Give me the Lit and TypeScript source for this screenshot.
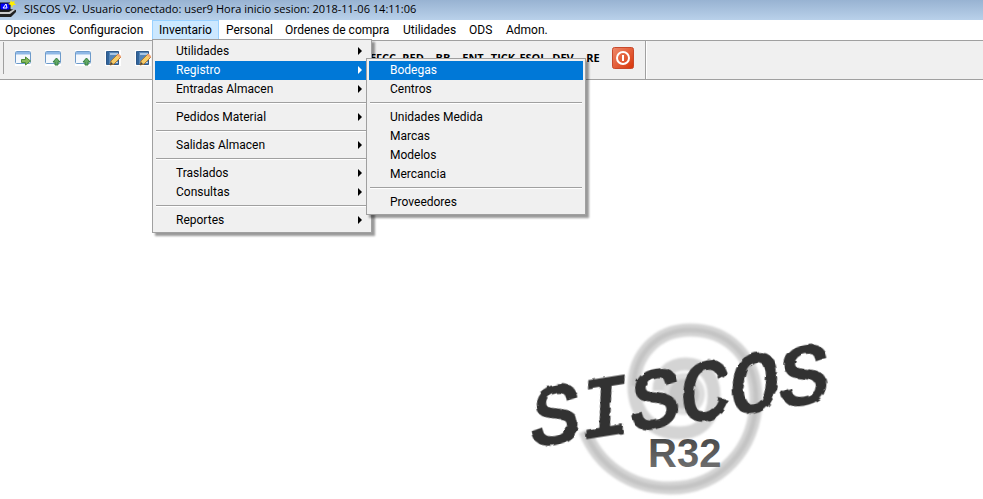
import { LitElement, html, css, svg, nothing } from "lit";
import { customElement, property } from "lit/decorators.js";

type Entry = { label: string; arrow?: boolean; active?: boolean } | null;

const inventory: Entry[] = [
  { label: "Utilidades", arrow: true },
  { label: "Registro", arrow: true, active: true },
  { label: "Entradas Almacen", arrow: true },
  null,
  { label: "Pedidos Material", arrow: true },
  null,
  { label: "Salidas Almacen", arrow: true },
  null,
  { label: "Traslados", arrow: true },
  { label: "Consultas", arrow: true },
  null,
  { label: "Reportes", arrow: true },
];

const registry: Entry[] = [
  { label: "Bodegas", active: true },
  { label: "Centros" },
  null,
  { label: "Unidades Medida" },
  { label: "Marcas" },
  { label: "Modelos" },
  { label: "Mercancia" },
  null,
  { label: "Proveedores" },
];

const topMenu = ["Opciones", "Configuracion", "Inventario", "Personal", "Ordenes de compra", "Utilidades", "ODS", "Admon."];

const windowFrame = svg`
  <rect width="16" height="16" fill="#fff"/>
  <rect x="0.5" y="1.5" width="15" height="12" rx="1" fill="#f4f8fd" stroke="#6e9bcb"/>
  <path d="M1 2h14v2H1z" fill="#8fb8e6"/><path d="M1 4h14v1H1z" fill="#c3d9f1"/>`;

const icons = {
  exit: svg`${windowFrame}<path d="M6.500 9.500h4V7l5 4-5 4v-2.500h-4z" fill="#86b95a" stroke="#4a8a35"/>`,
  up: svg`${windowFrame}<path d="M11.500 8l3.500 4h-2v3h-3v-3H8z" fill="#62a865" stroke="#35803f"/>`,
  edit: svg`
    <rect width="16" height="16" fill="#fff"/>
    <path d="M1.500 1.500h12v13h-12z" fill="#5585b8" stroke="#2e5788"/>
    <path d="M2 1h2v14H2z" fill="#32659b"/><path d="M5 3h8v2H5z" fill="#a9c6e4"/><path d="M5 12h8v1H5z" fill="#bdd2e8"/>
    <path d="M5 15l1-4 7-7 3 3-7 7z" fill="#f6cd6a" stroke="#b0782b"/><path d="M5 15l1-3 2 2z" fill="#444"/><path d="M12 5l1.500-1.500 3 3L15 8z" fill="#efa27a"/>`,
};

@customElement("popup-menu")
export class PopupMenu extends LitElement {
  @property({ attribute: false }) entries: Entry[] = [];

  static styles = css`
    :host { display: block; }
    .menu {
      box-sizing: border-box;
      width: 220px;
      margin: 0;
      padding: 2px;
      list-style: none;
      background: #f0f0f0;
      border: 1px solid #a0a0a0;
      box-shadow: 3px 3px 2px rgba(0, 0, 0, 0.4);
    }
    .item {
      display: flex;
      align-items: center;
      justify-content: space-between;
      width: 100%;
      height: 19px;
      padding: 0 7px 2px 21px;
      border: 0;
      background: none;
      color: #000;
      font: inherit;
      text-align: left;
    }
    .active { background: #0078d7; color: #fff; }
    .rule { height: 1px; margin: 3px 1px 4px; background: #a0a0a0; border-bottom: 1px solid #fff; }
    .arrow { width: 4px; height: 8px; fill: currentColor; }
  `;

  render() {
    return html`<ul class="menu" role="menu">
      ${this.entries.map((e) =>
        e === null
          ? html`<li class="rule" role="separator"></li>`
          : html`<li role="none">
              <button class="item ${e.active ? "active" : ""}" role="menuitem">
                ${e.label}
                ${e.arrow ? html`<svg class="arrow" viewBox="0 0 4 8"><path d="M0 0l4 4-4 4z"/></svg>` : nothing}
              </button>
            </li>`
      )}
    </ul>`;
  }
}

@customElement("app-root")
export class AppRoot extends LitElement {
  static styles = css`
    :host {
      display: flex;
      flex-direction: column;
      min-height: 100vh;
      background: #fff;
      color: #000;
      font: 12px/16px Roboto, "Noto Sans", sans-serif;
      overflow: hidden;
    }
    .title {
      display: flex;
      align-items: center;
      gap: 8px;
      height: 20px;
      background: linear-gradient(#98b3d2, #b9d1ea);
    }
    .title h1 { margin: 0; font: 11px/16px "Open Sans", "Noto Sans", sans-serif; white-space: nowrap; padding-bottom: 2px; }
    .app-icon { width: 16px; height: 20px; }
    .menubar {
      display: grid;
      grid-template-columns: 62px 90px 67px 59px 118px 66px 37px 57px;
      height: 20px;
    }
    .top {
      box-sizing: border-box;
      padding: 0 0 0 7px;
      border: 0;
      background: none;
      color: inherit;
      font: inherit;
      text-align: left;
      white-space: nowrap;
    }
    .menubar > .top:first-child { padding-left: 5px; }
    .open { background: #cce8ff; box-shadow: inset 0 0 0 1px #99d1ff; }
    .anchor { position: relative; display: grid; }
    .drop { position: absolute; z-index: 1; top: 19px; left: 0; }
    .sub { position: absolute; z-index: 2; top: 38px; left: 214px; }
    .toolbar {
      display: flex;
      height: 38px;
      background: #f0f0f0;
      border-top: 1px solid #a0a0a0;
      border-bottom: 1px solid #a0a0a0;
    }
    .band {
      display: flex;
      align-items: center;
      box-sizing: border-box;
      width: 646px;
      padding: 0 0 4px 5px;
      border-right: 1px solid #a0a0a0;
      box-shadow: 1px 0 #fff;
    }
    .grip { width: 1px; height: 32px; margin-left: -2px; margin-right: 4px; background: #a0a0a0; }
    .tool {
      display: grid;
      place-items: center;
      flex: none;
      width: 30px;
      height: 32px;
      padding: 0;
      border: 0;
      background: none;
      color: inherit;
      font: bold 11px/14px "Open Sans", "Noto Sans", sans-serif;
    }
    .glyph { width: 16px; height: 16px; }
    .power { width: 22px; height: 22px; }
    .workspace { flex: 1; display: flex; align-items: flex-end; justify-content: flex-end; }
    .logo { width: 340px; height: 189px; margin-right: 133px; }
    .word { font: italic 84px "Liberation Mono", monospace; fill: #333; stroke: #333; stroke-width: 3px; }
    .version { font: bold 40px "Liberation Sans", sans-serif; }
  `;

  private tool(name: string, icon: unknown) {
    return html`<button class="tool" aria-label=${name}><svg class="glyph" viewBox="0 0 16 16">${icon}</svg></button>`;
  }

  private topItem(label: string) {
    if (label !== "Inventario") return html`<button class="top">${label}</button>`;
    return html`<div class="anchor">
      <button class="top open" aria-expanded="true">${label}</button>
      <div class="drop">
        <popup-menu .entries=${inventory}></popup-menu>
      </div>
      <div class="sub"><popup-menu .entries=${registry}></popup-menu></div>
    </div>`;
  }

  render() {
    return html`
      <header class="title">
        <svg class="app-icon" viewBox="0 0 16 20">
          <path d="M0 10l10-1 6 1v2l-5 5H0z" fill="#222"/>
          <path d="M0 12h9l5-3 1 1-5 4H0z" fill="#ccc"/>
          <path d="M0 3h10v7H0z" fill="#00f" stroke="#111"/>
          <path d="M3 8l3-4 1 4z" stroke="#fff" fill="none"/>
          <path d="M11 0l1 2 3-1-1 2 2 2-3 0-1 3-1-3-3-1 2-1z" fill="#ffef00"/>
        </svg>
        <h1>SISCOS V2. Usuario conectado: user9 Hora inicio sesion: 2018-11-06 14:11:06</h1>
      </header>
      <nav class="menubar">${topMenu.map((t) => this.topItem(t))}</nav>
      <div class="toolbar" role="toolbar">
        <div class="band">
          <span class="grip"></span>
          ${this.tool("Salir", icons.exit)} ${this.tool("Abrir", icons.up)} ${this.tool("Subir", icons.up)}
          ${this.tool("Editar", icons.edit)} ${this.tool("Modificar", icons.edit)}
          ${Array.from({ length: 7 }, () => html`<span class="tool"></span>`)}
          ${["EFCC", "RED", "BB", "ENT", "TICK", "ESOL", "DEV", "RE"].map((t) => html`<button class="tool">${t}</button>`)}
          <button class="tool" aria-label="Apagar">
            <svg class="power" viewBox="0 0 22 22">
              <defs><linearGradient id="red" x2="1" y2="1"><stop stop-color="#ee8a6c"/><stop offset="1" stop-color="#d83408"/></linearGradient></defs>
              <rect x="0.5" y="0.5" width="21" height="21" rx="2" fill="url(#red)" stroke="#c8492c"/>
              <circle cx="11" cy="11" r="6" fill="none" stroke="#fff" stroke-width="2"/>
              <path d="M11 8v6" stroke="#fff" stroke-width="2"/>
            </svg>
          </button>
        </div>
      </div>
      <main class="workspace">
        <svg class="logo" viewBox="0 0 340 189">
          <defs>
            <filter id="soft"><feGaussianBlur stdDeviation="1"/></filter>
            <filter id="rough"><feTurbulence type="fractalNoise" baseFrequency="0.1" numOctaves="2"/><feDisplacementMap in="SourceGraphic" scale="4"/></filter>
            <linearGradient id="shade" x2="0" y2="1"><stop offset="0.2" stop-color="#4c4c4c"/><stop offset="1" stop-color="#777"/></linearGradient>
          </defs>
          <g fill="none" filter="url(#soft)">
            <path d="M75 121C88 155 120 178 160 178C211 178 246 137 246 89C246 46 217 20 180 20C147 20 124 45 124 76C124 105 143 123 169 123C192 123 204 108 204 86C204 66 193 54 176 54C160 54 149 64 149 81" stroke="#d4d4d4" stroke-width="13"/>
            <path d="M75 121C88 155 120 178 160 178C211 178 246 137 246 89C246 46 217 20 180 20C147 20 124 45 124 76" stroke="#c4c4c4" stroke-width="5"/>
            <circle cx="174" cy="84" r="18" fill="#c8c8c8" stroke="#ddd" stroke-width="6"/>
          </g>
          <text class="word" x="24" y="136" transform="rotate(-9 24 136)" filter="url(#rough)">SISCOS</text>
          <text class="version" x="138" y="157" fill="url(#shade)">R32</text>
        </svg>
      </main>
    `;
  }
}
